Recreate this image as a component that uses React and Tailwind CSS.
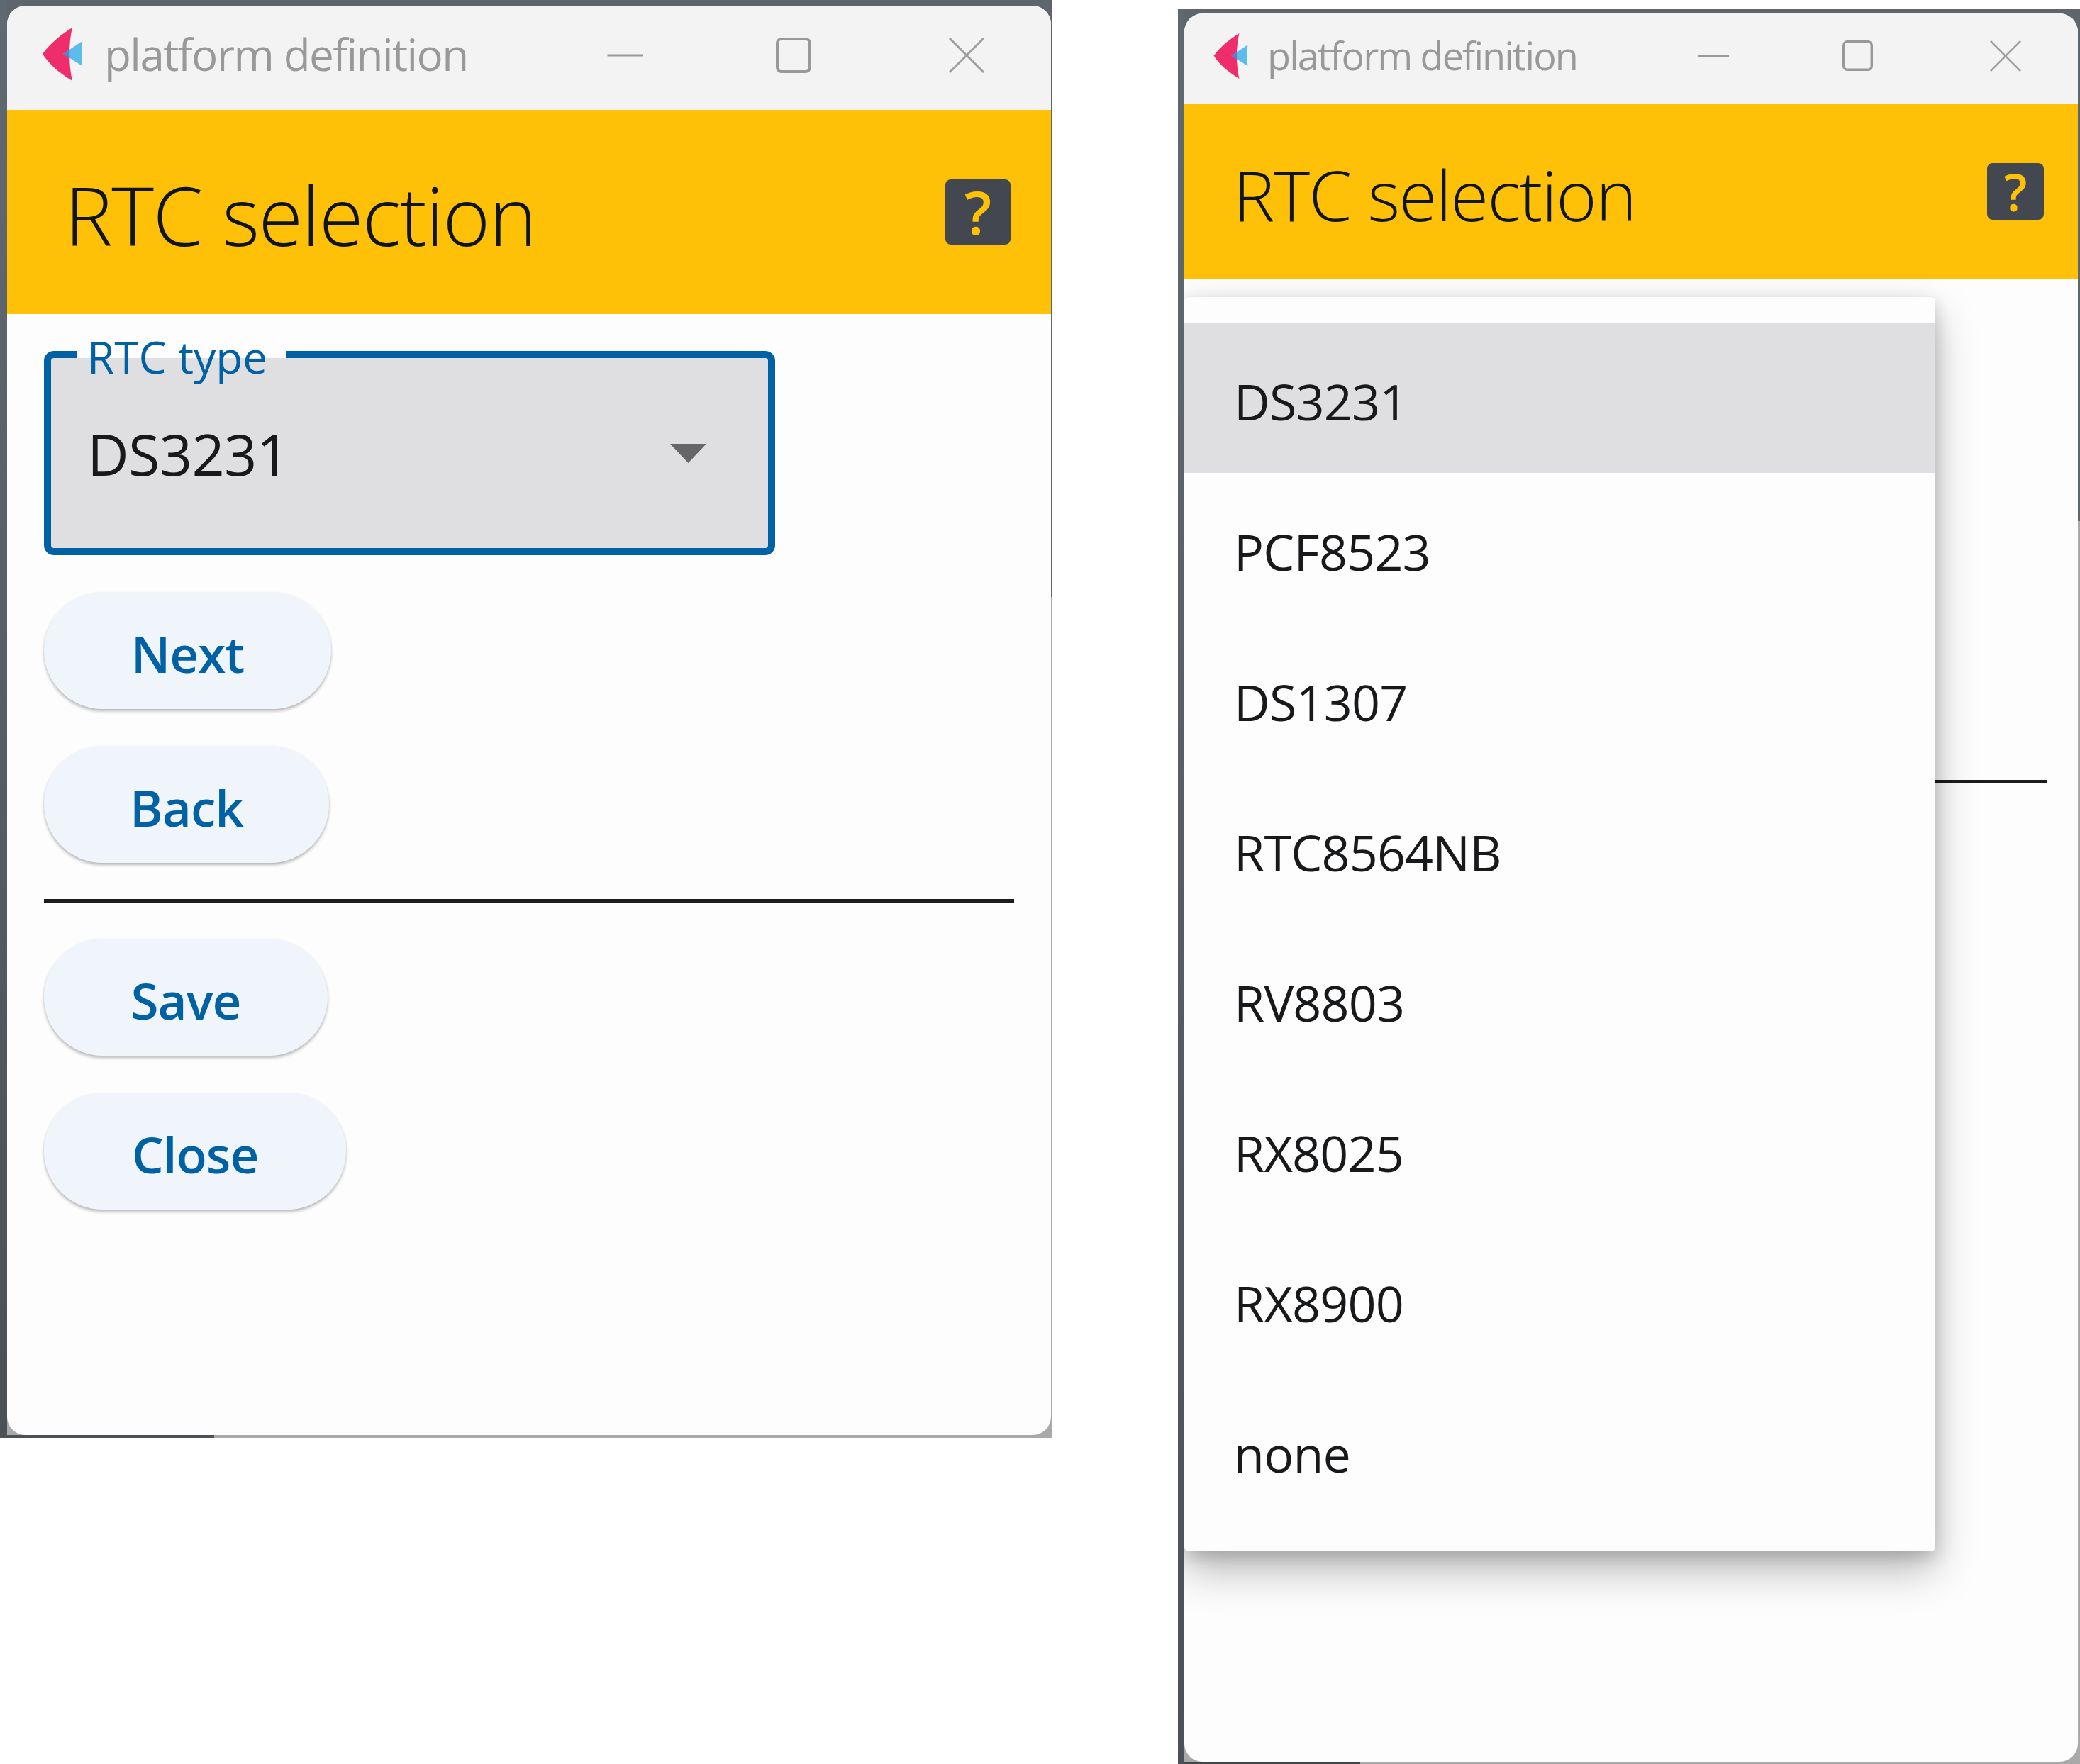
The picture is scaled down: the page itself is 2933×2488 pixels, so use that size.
import React from 'react';

const RTC_OPTIONS = ['DS3231', 'PCF8523', 'DS1307', 'RTC8564NB', 'RV8803', 'RX8025', 'RX8900', 'none'];

const BUTTONS_TOP = [
    { label: 'Next', width: 'w-[405px]' },
    { label: 'Back', width: 'w-[402px]' },
];
const BUTTONS_BOTTOM = [
    { label: 'Save', width: 'w-[400px]' },
    { label: 'Close', width: 'w-[426px]' },
];

const Logo = ({ className }) => (
    <svg viewBox="0 0 56 75" className={className}>
        <path d="M42 0C22 12 8 26 0 37C8 50 22 63 42 75C39 62 38 50 38 37C38 25 39 12 42 0Z" fill="#ef2d6c" />
        <path d="M56 19L29 37L56 54Q54 37 56 19Z" fill="#5cbdec" />
        <path d="M38.300 31L29 37L38.300 43Q38 37 38.300 31Z" fill="#5f80c6" />
    </svg>
);

const WindowButtons = ({ minClass, maxClass, closeClass, stroke }) => (
    <div className="flex items-center ml-auto">
        <svg viewBox="0 0 50 4" className={minClass}>
            <line x1="0" y1="2" x2="50" y2="2" stroke="#9a9a9a" strokeWidth={stroke} />
        </svg>
        <svg viewBox="0 0 50 50" className={maxClass}>
            <rect x="2" y="2" width="46" height="46" rx="6" fill="none" stroke="#999999" strokeWidth={stroke + 1} />
        </svg>
        <svg viewBox="0 0 50 50" className={closeClass}>
            <path d="M1 1L49 49M49 1L1 49" fill="none" stroke="#9f9f9f" strokeWidth={stroke} />
        </svg>
    </div>
);

const PillButton = ({ label, width }) => (
    <button className={`${width} h-[165px] pt-[8px] rounded-full bg-[#f0f4fb] shadow-[0_3px_4px_rgba(0,0,0,0.28)] text-[71px] font-[550] tracking-[-1px] text-[#0061a4] leading-none flex items-center justify-center`}>
        {label}
    </button>
);

const Field = () => (
    <div className="relative w-[1031px] h-[288px] rounded-[14px] border-[10px] border-[#0061a4] bg-[#dfdfe1] flex items-center justify-between pl-[51px] pr-[87px]">
        <div className="absolute -top-[10px] left-[37px] w-[294px] h-[10px] bg-[#fdfdfe]"></div>
        <span className="absolute -top-[33px] left-[51px] text-[62px] font-normal leading-none tracking-[0.100px] text-[#0061a4]">RTC type</span>
        <span className="text-[81px] font-[430] tracking-[-0.700px] text-[#17191b] leading-none">DS3231</span>
        <svg viewBox="0 0 51 27" className="w-[51px] h-[27px]">
            <path d="M0 0H51L25.500 27Z" fill="#666666" />
        </svg>
    </div>
);

const Menu = () => (
    <div className="absolute left-0 top-[26px] w-[1059px] h-[1769px] py-[36px] rounded-[6px] bg-[#fdfdfe] shadow-[0_28px_60px_rgba(0,0,0,0.26),0_8px_24px_rgba(0,0,0,0.18)]">
        {RTC_OPTIONS.map((name, i) => (
            <div
                key={name}
                className={`h-[212px] pl-[70px] pt-[10px] flex items-center text-[70px] font-[430] tracking-[-0.800px] text-[#17191b] leading-none ${i === 0 ? 'bg-[#dfdfe1]' : ''}`}
            >
                {name}
            </div>
        ))}
    </div>
);

export default function App() {
    return (
        <div className="w-[2933px] h-[2488px] bg-white flex items-start gap-[177px] font-['Open_Sans',sans-serif]">
            {/* Linke Fenster: geschlossenes Auswahlfeld */}
            <div className="w-[1484px] h-[2028px] shrink-0 flex pl-[10px] pt-[8px] pr-[2px] pb-[4px] [background:linear-gradient(#5f6a70,#4a5258)_left/10px_100%_no-repeat,linear-gradient(to_right,#4a5258_302px,#a9a9a9_302px)_bottom/100%_4px_no-repeat,linear-gradient(to_bottom,#5f666b_842px,#a9a9a9_842px)]">
                <div className="flex-1 flex flex-col rounded-[26px] overflow-hidden bg-[#fdfdfe]">
                    <div className="h-[147px] shrink-0 bg-[#f3f3f3] flex items-center pl-[50px] pr-[93px] pb-[8px]">
                        <Logo className="w-[56px] h-[75px] -mt-[2px]" />
                        <span className="ml-[31px] -mt-[3px] text-[62px] font-normal tracking-[-1.600px] text-[#999999] leading-none">platform definition</span>
                        <WindowButtons minClass="w-[51px] h-[4px]" maxClass="ml-[187px] w-[50px] h-[50px]" closeClass="ml-[193px] w-[52px] h-[50px]" stroke={3} />
                    </div>
                    <div className="h-[288px] shrink-0 bg-[#ffc107] flex items-center justify-between pl-[81px] pr-[57px]">
                        <span className="mt-[8px] text-[114px] font-light tracking-[-1.500px] text-[#10151c] leading-none">RTC selection</span>
                        <div className="w-[92px] h-[92px] rounded-[8px] bg-[#434750] flex items-center justify-center text-[84px] font-semibold text-[#ffc107] leading-none">?</div>
                    </div>
                    <div className="flex-1 pt-[52px] pl-[52px] pr-[52px] flex flex-col gap-[52px]">
                        <Field />
                        {BUTTONS_TOP.map(b => <PillButton key={b.label} {...b} />)}
                        <div className="h-[5px] -my-[1px] bg-[#1a1c1e]"></div>
                        {BUTTONS_BOTTOM.map(b => <PillButton key={b.label} {...b} />)}
                    </div>
                </div>
            </div>

            {/* Rechtes Fenster: geöffnetes Menü */}
            <div className="w-[1272px] h-[2475px] mt-[13px] shrink-0 flex pl-[9px] pt-[6px] pr-[3px] pb-[3px] [background:linear-gradient(#5f6a70,#4a5258)_left/9px_100%_no-repeat,linear-gradient(to_right,#3f474d_257px,#a9a9a9_257px)_bottom/100%_3px_no-repeat,linear-gradient(to_bottom,#5f666b_722px,#a9a9a9_722px)]">
                <div className="flex-1 flex flex-col rounded-[26px] overflow-hidden bg-[#fdfdfe]">
                    <div className="h-[127px] shrink-0 bg-[#f3f3f3] flex items-center pl-[41px] pr-[80px] pb-[8px]">
                        <Logo className="w-[49px] h-[64px]" />
                        <span className="ml-[27px] -mt-[1px] text-[54px] font-normal tracking-[-1.900px] text-[#999999] leading-none">platform definition</span>
                        <WindowButtons minClass="w-[44px] h-[4px]" maxClass="ml-[160px] w-[43px] h-[43px]" closeClass="ml-[165px] w-[44px] h-[44px]" stroke={3} />
                    </div>
                    <div className="h-[247px] shrink-0 bg-[#ffc107] flex items-center justify-between pl-[69px] pr-[48px]">
                        <span className="mt-[8px] text-[98px] font-light tracking-[-1.600px] text-[#10151c] leading-none">RTC selection</span>
                        <div className="w-[80px] h-[80px] rounded-[8px] bg-[#434750] flex items-center justify-center text-[72px] font-semibold text-[#ffc107] leading-none">?</div>
                    </div>
                    <div className="relative flex-1 pr-[44px]">
                        <div className="h-[5px] mt-[707px] bg-[#1a1c1e]"></div>
                        <Menu />
                    </div>
                </div>
            </div>
        </div>
    );
}
